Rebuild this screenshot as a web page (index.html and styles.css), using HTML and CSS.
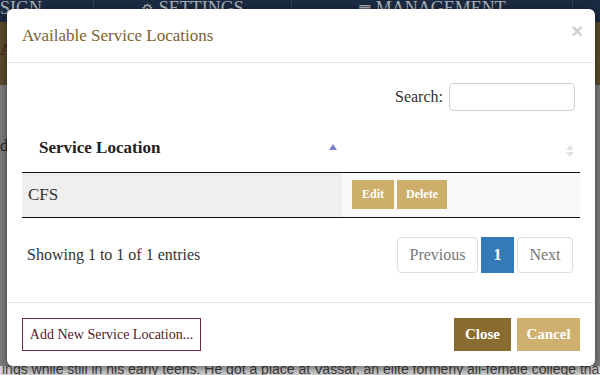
FILE: index.html
```html
<!DOCTYPE html>
<html lang="en">
<head>
    <meta charset="UTF-8">
    <meta name="viewport" content="width=device-width, initial-scale=1.0">
    <title>Service Locations</title>
    <link rel="stylesheet" href="styles.css">
</head>
<body>
    <!-- page behind the dialog (dimmed) -->
    <div class="page">
        <div class="nav">
            <div class="nav-item nav-first">SIGN</div>
            <div class="nav-item nav-mid"><span class="nav-ico">&#9881;</span> SETTINGS</div>
            <div class="nav-item nav-wide"><span class="nav-ico">&#9638;</span> MANAGEMENT</div>
            <div class="nav-item nav-last"></div>
        </div>
        <div class="band"><span class="band-text">A</span></div>
        <div class="content">
            <span class="content-text">d</span>
        </div>
        <div class="bottom-text">ings while still in his early teens. He got a place at Vassar, an elite formerly all-female college that had only r</div>
    </div>

    <div class="modal">
        <div class="modal-header">
            <h4 class="modal-title">Available Service Locations</h4>
            <span class="close-x">&times;</span>
        </div>

        <div class="modal-body">
            <div class="search-row">
                <label class="search-label">Search:</label>
                <input type="text" class="search-input">
            </div>

            <table class="data-table">
                <thead>
                    <tr>
                        <th class="col-name sort-asc">Service Location</th>
                        <th class="col-actions sort-both"></th>
                    </tr>
                </thead>
                <tbody>
                    <tr>
                        <td class="cell-name">CFS</td>
                        <td class="cell-actions">
                            <button class="btn-small btn-edit">Edit</button>
                            <button class="btn-small btn-delete">Delete</button>
                        </td>
                    </tr>
                </tbody>
            </table>

            <div class="info-row">
                <div class="info-text">Showing 1 to 1 of 1 entries</div>
                <div class="pager">
                    <span class="page-btn page-prev">Previous</span>
                    <span class="page-btn page-num active">1</span>
                    <span class="page-btn page-next">Next</span>
                </div>
            </div>
        </div>

        <div class="modal-footer">
            <button class="btn btn-add">Add New Service Location...</button>
            <div class="footer-right">
                <button class="btn btn-close">Close</button>
                <button class="btn btn-cancel">Cancel</button>
            </div>
        </div>
    </div>
</body>
</html>
```

FILE: styles.css
```css
body {
    margin: 0;
    width: 600px;
    height: 375px;
    overflow: hidden;
    font-family: "Liberation Serif", "DejaVu Serif", serif;
    color: #333;
    background: #7d7d7d;
}
.page {
    display: flex;
    flex-direction: column;
    height: 375px;
}
.nav {
    height: 22px;
    display: flex;
    background: #1b2a40;
    overflow: hidden;
}
.nav-item {
    color: #aab0b8;
    font-size: 18px;
    line-height: 16px;
    text-align: center;
    border-right: 1px solid #2f3f57;
}
.nav-first { width: 93px; text-align: left; }
.nav-mid { width: 197px; }
.nav-wide { width: 280px; }
.nav-last { flex: 1; border-right: none; }
.nav-ico { font-size: 14px; }
.band {
    height: 63px;
    background: #5a4b2d;
}
.band-text {
    display: inline-block;
    margin-top: 18px;
    color: #4a1418;
    font-size: 17px;
}
.content {
    flex: 1;
    background: #7d7d7d;
}
.content-text {
    display: inline-block;
    margin-top: 52px;
    font-size: 16px;
    color: #222;
}
.bottom-text {
    height: 9px;
    background: #d6d6d6;
    color: #444;
    font-family: "Liberation Sans", Arial, sans-serif;
    font-size: 14px;
    line-height: 6px;
    white-space: nowrap;
    overflow: hidden;
    padding-left: 2px;
}

/* dialog */
.modal {
    position: absolute;
    left: 7px;
    top: 9px;
    width: 588px;
    height: 357px;
    background: #fff;
    border-radius: 6px;
    box-shadow: 0 3px 9px rgba(0, 0, 0, 0.5);
    display: flex;
    flex-direction: column;
}
.modal-header {
    height: 53px;
    padding: 0 15px;
    border-bottom: 1px solid #e5e5e5;
    display: flex;
    align-items: center;
    justify-content: space-between;
}
.modal-title {
    margin: 0;
    font-size: 17px;
    font-weight: normal;
    color: #7d6230;
}
.close-x {
    align-self: flex-start;
    margin-top: 11px;
    margin-right: -3px;
    font-family: "Liberation Sans", Arial, sans-serif;
    font-size: 20px;
    font-weight: bold;
    color: #cfcfcf;
}
.modal-body {
    height: 239px;
    padding: 20px 15px 0;
    box-sizing: border-box;
}
.search-row {
    display: flex;
    justify-content: flex-end;
    align-items: center;
    gap: 6px;
    padding-right: 5px;
}
.search-label {
    font-size: 16px;
    color: #333;
}
.search-input {
    width: 126px;
    height: 28px;
    box-sizing: border-box;
    border: 1px solid #ccc;
    border-radius: 4px;
    margin: 0;
}
.data-table {
    width: 100%;
    margin-top: 13px;
    border-collapse: collapse;
}
.data-table th {
    height: 48px;
    padding: 0 18px 0 17px;
    text-align: left;
    font-size: 17px;
    font-weight: bold;
    color: #222;
    border-bottom: 1px solid #111;
    box-sizing: border-box;
    position: relative;
}
.col-name { width: 320px; }
.sort-asc::after {
    content: "";
    position: absolute;
    right: 5px;
    top: 20px;
    border-left: 4px solid transparent;
    border-right: 4px solid transparent;
    border-bottom: 6px solid #7b80d3;
}
.sort-both::before,
.sort-both::after {
    content: "";
    position: absolute;
    right: 6px;
    border-left: 4px solid transparent;
    border-right: 4px solid transparent;
}
.sort-both::before {
    top: 21px;
    border-bottom: 5px solid #e2e2e2;
}
.sort-both::after {
    top: 28px;
    border-top: 5px solid #e2e2e2;
}
.data-table td {
    height: 45px;
    border-bottom: 1px solid #111;
    box-sizing: border-box;
}
.cell-name {
    background: #efefef;
    padding-left: 6px;
    font-size: 17px;
    color: #333;
}
.cell-actions {
    background: #f9f9f9;
    padding-left: 10px;
}
.btn-small {
    height: 29px;
    padding: 0;
    border: none;
    background: #cdae6b;
    color: #fff;
    font-family: "Liberation Serif", serif;
    font-size: 12px;
    font-weight: bold;
    vertical-align: middle;
}
.btn-edit { width: 42px; }
.btn-delete { width: 50px; margin-left: -1px; }
.info-row {
    margin-top: 19px;
    display: flex;
    align-items: center;
    justify-content: space-between;
}
.info-text {
    padding-left: 5px;
    font-size: 16px;
    color: #333;
}
.pager {
    display: flex;
    gap: 3px;
    margin-right: 7px;
}
.page-btn {
    height: 36px;
    box-sizing: border-box;
    border: 1px solid #ddd;
    border-radius: 4px;
    display: flex;
    align-items: center;
    justify-content: center;
    font-size: 16px;
    color: #777;
}
.page-prev { width: 81px; }
.page-num { width: 33px; }
.page-next { width: 56px; }
.page-btn.active {
    background: #337ab7;
    border-color: #337ab7;
    color: #fff;
    font-weight: bold;
    border-radius: 0;
}
.modal-footer {
    flex: 1;
    border-top: 1px solid #e5e5e5;
    padding: 15px;
    display: flex;
    justify-content: space-between;
    align-items: flex-start;
}
.btn {
    height: 33px;
    border: none;
    font-family: "Liberation Serif", serif;
    font-size: 14px;
    cursor: pointer;
}
.btn-add {
    width: 179px;
    background: #fff;
    border: 1px solid #6e2a36;
    color: #521a26;
}
.footer-right {
    display: flex;
    gap: 6px;
}
.btn-close {
    width: 57px;
    background: #8b6c30;
    color: #fff;
    font-size: 15px;
    font-weight: bold;
}
.btn-cancel {
    width: 63px;
    background: #cfb06f;
    color: #fff;
    font-size: 15px;
    font-weight: bold;
}
```
